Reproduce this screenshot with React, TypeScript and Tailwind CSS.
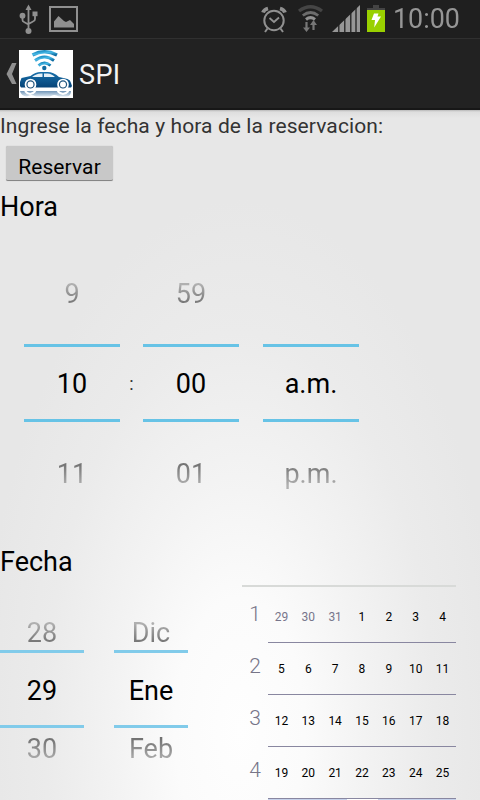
import React from "react";

type Tone = "above" | "current" | "below";

const toneClass: Record<Tone, string> = {
  above: "bg-linear-to-b from-[#b0b0b0] from-20% to-[#707070] to-85% bg-clip-text text-transparent",
  current: "text-black",
  below: "bg-linear-to-b from-[#707070] from-15% to-[#b0b0b0] to-85% bg-clip-text text-transparent",
};

function Value({ text, tone }: { text: string; tone: Tone }) {
  return <span className={`block h-8 text-[27px] leading-8 ${toneClass[tone]}`}>{text}</span>;
}

function TimePicker({ values }: { values: [string, string, string] }) {
  return (
    <div className="flex h-[226px] w-24 flex-col items-center">
      <div className="h-[66px]"><Value text={values[0]} tone="above" /></div>
      <div className="flex h-[78px] w-full justify-center border-y-3 border-[#67c3e6] pt-[21px]">
        <Value text={values[1]} tone="current" />
      </div>
      <div className="pt-[36px]"><Value text={values[2]} tone="below" /></div>
    </div>
  );
}

function DatePicker({ values, width }: { values: [string, string, string]; width: string }) {
  return (
    <div className={`flex flex-col items-center pt-[33px] ${width}`}>
      <div className="h-[33px]"><Value text={values[0]} tone="above" /></div>
      <div className="flex h-[78px] w-full justify-center border-y-3 border-[#81cbea] pt-[22px]">
        <Value text={values[1]} tone="current" />
      </div>
      <div className="pt-[5px]"><Value text={values[2]} tone="below" /></div>
    </div>
  );
}

function StatusBar() {
  return (
    <div className="flex h-[38px] shrink-0 bg-[#1f1f1f]">
      <svg width="90" height="38" viewBox="0 0 90 38">
        <g fill="#909090" stroke="#909090">
          <path d="M28.5 4.500l3 5.500h-6z" stroke="none" />
          <path d="M28.500 9v20M22.500 17v3q0 1.500 1.500 2l4.500 2.500M35 15v4q0 2-2 2.500L28.500 24" fill="none" strokeWidth="1.800" />
          <circle cx="22.500" cy="15.700" r="2.900" stroke="none" />
          <rect x="32.500" y="11.500" width="5" height="4.700" stroke="none" />
          <circle cx="28.500" cy="31" r="3" stroke="none" />
        </g>
        <rect x="50" y="7" width="27" height="24" fill="none" stroke="#909090" strokeWidth="2" />
        <path d="M54 27.500v-6l4.500-5.500 5.500 5 2 1 4-2 4 4v3.500z" fill="#909090" />
      </svg>
      <div className="flex-1" />
      <svg width="140" height="38" viewBox="250 0 140 38">
        <g fill="none" stroke="#909090">
          <circle cx="274" cy="20.500" r="9.700" strokeWidth="2" />
          <path d="M269.500 18l4.500 4 5-4.500" strokeWidth="1.800" />
          <path d="M267.500 28.500l-2.500 3.500M280.500 28.500l2.500 3.500" strokeWidth="2" />
          <path d="M263 12.500q1-3 5-4M285 12.500q-1-3-5-4" strokeWidth="3.800" />
        </g>
        <g fill="none">
          <path d="M299 11q11.500-8.500 23 0" stroke="#454545" strokeWidth="3.400" />
          <path d="M302.800 15.500q7.800-6 15.400 0" stroke="#6c6c6c" strokeWidth="2.800" />
          <path d="M306 19.500q4.500-3.700 9 0" stroke="#909090" strokeWidth="3" />
          <path d="M306.500 22v7M313.500 30v-7" stroke="#777" strokeWidth="2.200" />
        </g>
        <path d="M303 27.500h7l-3.500 4.500zM310 25h7l-3.500-5z" fill="#777" />
        <path d="M332 32L360 5v27z" fill="#969696" />
        <path d="M338.800 24v8M344.800 18v14M350.800 12v20M356 8v24" stroke="#1f1f1f" strokeWidth="1.300" />
        <path d="M373 5h6v3h6v2h-18V8h6z" fill="#444" />
        <path d="M367 10h18v22h-18z" fill="#99d000" />
        <path d="M374 13.500h4.500l-1 3h3.500l-6.800 11 .8-7.500h-3.500z" fill="white" />
      </svg>
      <time className="w-[90px] pl-[3px] text-[28px] leading-[38px] text-[#969696]"><span className="inline-block origin-left scale-x-[.96]">10:00</span></time>
    </div>
  );
}

function AppLogo() {
  return (
    <svg className="mt-[11px] shrink-0" width="54" height="48" viewBox="0 0 54 48">
      <defs>
        <linearGradient id="wave" x1="0" y1="0" x2="1" y2="1">
          <stop stopColor="#1687bd" /><stop offset=".45" stopColor="#48b9e6" /><stop offset="1" stopColor="#08679e" />
        </linearGradient>
        <linearGradient id="body" x1="0" y1="0" x2="0" y2="1">
          <stop stopColor="#176faa" /><stop offset="1" stopColor="#064478" />
        </linearGradient>
        <linearGradient id="reflection" x1="0" y1="0" x2="0" y2="1">
          <stop stopColor="#7095b7" /><stop offset="1" stopColor="#dbe6ef" />
        </linearGradient>
      </defs>
      <rect width="54" height="48" fill="white" />
      <g fill="none" stroke="url(#wave)">
        <path d="M13.500 5Q25.500-1.500 38 5" strokeWidth="3.300" />
        <path d="M16 10.500Q25.500 3.500 35 10.500" strokeWidth="3" />
        <path d="M19.500 15.500Q25.500 10.500 31.500 15.500" strokeWidth="2.800" />
      </g>
      <circle cx="25.300" cy="18" r="2.200" fill="#126ba0" />
      <path d="M1 36v-4l1.500-4 9-2q5-4 10-4h7q6 0 11.500 5l8.500 2q3 1 3.500 4l1 3-1 1.500H2z" fill="url(#body)" />
      <path d="M13 27q4-3.500 9-3.500h1.500V27zM25 23.500h3.500q4 0 7.500 3.500H25z" fill="#e5f0f7" />
      <g fill="white" stroke="#24577e" strokeWidth="1.300"><circle cx="11.500" cy="34.500" r="3.600" /><circle cx="44" cy="34.500" r="3.600" /></g>
      <g fill="none" stroke="white" strokeWidth="1.700"><circle cx="11.500" cy="34.500" r="5" /><circle cx="44" cy="34.500" r="5" /></g>
      <path d="M1 41h51q0 5-4 5.500h-8q-5-3-9 0H17q-5-3-9 0Q2 46 1 41z" fill="url(#reflection)" />
      <path d="M6 41q5 6 10.500 0M38.500 41q5.500 6 11 0" fill="none" stroke="white" strokeWidth="2" />
    </svg>
  );
}

const weeks = [
  ["29", "30", "31", "1", "2", "3", "4"],
  ["5", "6", "7", "8", "9", "10", "11"],
  ["12", "13", "14", "15", "16", "17", "18"],
  ["19", "20", "21", "22", "23", "24", "25"],
];

export default function App() {
  return (
    <main className="flex h-[800px] w-[480px] flex-col overflow-hidden bg-[#e7e7e7] font-['Roboto',sans-serif] text-black">
      <StatusBar />
      <header className="flex h-[72px] shrink-0 border-t border-b-2 border-t-[#303030] border-b-[#171717] bg-[#222222]">
        <svg width="19" height="60" viewBox="0 39 19 60"><path d="M12 63h4.500l-4.500 11 4.500 10H12L6.500 74z" fill="#909090" /></svg>
        <AppLogo />
        <h1 className="ml-[6px] pt-[20px] text-[27px] leading-8 tracking-[.4px] text-[#f3f3f3]">SPI</h1>
      </header>
      <section className="flex h-[690px] shrink-0 flex-col bg-[linear-gradient(to_bottom,#b8b8b8_0,#dedede_2px,transparent_8px),radial-gradient(ellipse_260px_530px_at_240px_620px,#fefefe_0%,#fbfbfb_25%,#f3f3f3_48%,#ebebeb_75%,#e7e7e7_100%)]">
        <p className="h-[35px] pt-[3px] text-[21px] leading-[26px] tracking-[.1px] text-[#333]">Ingrese la fecha y hora de la reservacion:</p>
        <button className="ml-[6px] mt-px h-[35px] w-[107px] rounded-[2px] border-b border-[#868686] bg-[#c8c8c8] pt-[7px] text-[21px] leading-7 tracking-[.1px] shadow-[0_0_1px_#aaa]">Reservar</button>
        <h2 className="h-[98px] pt-[10px] text-[27px] leading-8">Hora</h2>
        <div className="flex h-[265px] pl-6">
          <div className="-mt-px flex">
            <TimePicker values={["9", "10", "11"]} />
            <span className="w-[23px] pt-[93px] text-center text-[18px] leading-[26px] text-[#333]">:</span>
            <TimePicker values={["59", "00", "01"]} />
            <div className="ml-6"><TimePicker values={["\u00a0", "a.m.", "p.m."]} /></div>
          </div>
        </div>
        <h2 className="h-[40px] pt-[2px] text-[27px] leading-8">Fecha</h2>
        <div className="flex h-[216px]">
          <DatePicker width="w-[84px]" values={["28", "29", "30"]} />
          <div className="ml-[30px]"><DatePicker width="w-[74px]" values={["Dic", "Ene", "Feb"]} /></div>
          <div className="mt-px ml-[54px] h-[215px] w-[214px] overflow-hidden border-t-2 border-[#d8dad8]">
            {weeks.map((days, row) => (
              <div key={days[0]} className={row === 0 ? "flex h-[56px]" : "flex h-[52px]"}>
                <span className={row === 0 ? "w-[26px] pt-[14px] text-center text-[21px] font-light leading-[26px] text-[#777588]" : "w-[26px] pt-[10px] text-center text-[21px] font-light leading-[26px] text-[#777588]"}>{row + 1}</span>
                <div className={row === 0 ? "grid w-[188px] grid-cols-7 border-b border-[#8987a0] pt-[22px]" : "grid w-[188px] grid-cols-7 border-b border-[#8987a0] pt-[18px]"}>
                  {days.map((day, i) => <span key={day} className={row === 0 && i < 3 ? "text-center text-[12px] leading-4 text-[#77758b]" : "text-center text-[12px] leading-4"}>{day}</span>)}
                </div>
              </div>
            ))}
            <div className="ml-[26px] flex h-px bg-[#c6d1eb]"><span className="ml-[79px] w-[31px] bg-white" /></div>
          </div>
        </div>
      </section>
    </main>
  );
}
